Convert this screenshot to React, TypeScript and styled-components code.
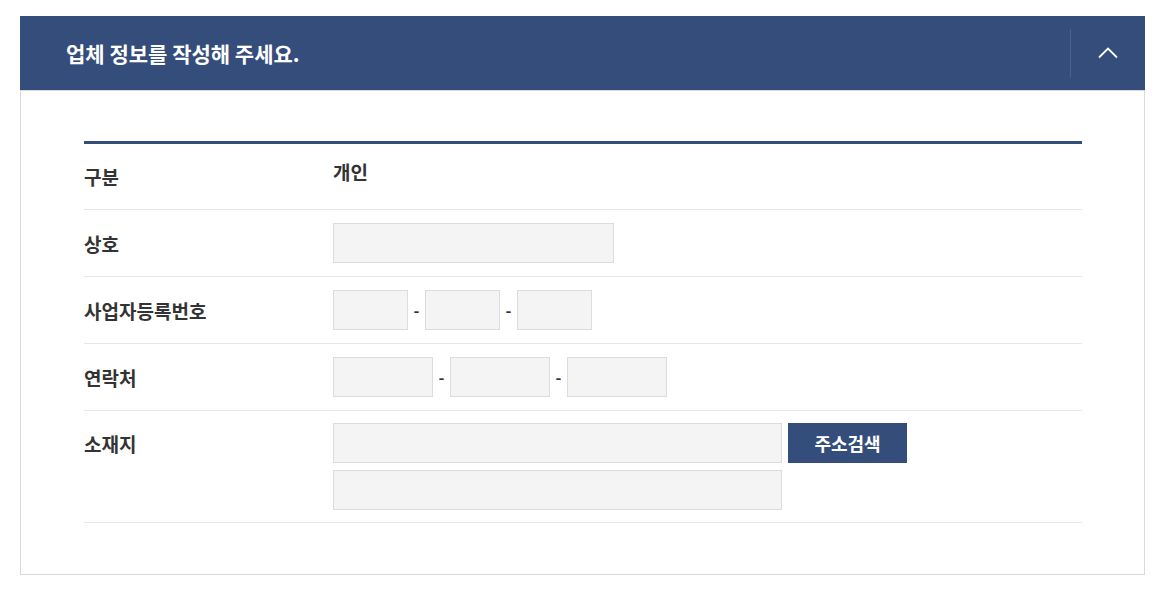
import React from "react";
import styled, { createGlobalStyle } from "styled-components";

const Global = createGlobalStyle`
  html, body { margin: 0; padding: 0; background: #fff; }
  body {
    font-family: "Noto Sans CJK KR", "Noto Sans", sans-serif;
    color: #333;
  }
  * { box-sizing: border-box; }
`;

const NAVY = "#344d7a";

const Page = styled.div`
  padding: 16px 0 0 20px;
`;

const Panel = styled.section`
  width: 1125px;
`;

const Header = styled.header`
  height: 74px;
  background: ${NAVY};
  display: flex;
  align-items: center;
`;

const Title = styled.h2`
  flex: 1;
  margin: 0;
  padding-left: 46px;
  color: #fff;
  font-size: 21px;
  font-weight: 700;
  letter-spacing: 0;
`;

const Divider = styled.span`
  width: 1px;
  height: 49px;
  background: #4a6190;
`;

const Toggle = styled.button`
  width: 74px;
  height: 74px;
  border: 0;
  padding: 0;
  background: transparent;
  display: flex;
  align-items: center;
  justify-content: center;
  cursor: pointer;
`;

const Body = styled.div`
  border: 1px solid #d9d9d9;
  padding: 50px 62px 51px 63px;
`;

const Table = styled.div`
  border-top: 3px solid ${NAVY};
`;

const Row = styled.div<{ $pad: string }>`
  display: grid;
  grid-template-columns: 249px 1fr;
  align-items: center;
  padding: ${(p) => p.$pad};
  border-bottom: 1px solid #e8e8e8;
`;

const Label = styled.div<{ $top?: boolean }>`
  font-size: 19px;
  font-weight: 700;
  color: #333;
  align-self: ${(p) => (p.$top ? "start" : "center")};
  padding-top: ${(p) => (p.$top ? "7px" : "0")};
`;

const Value = styled.div`
  font-size: 19px;
  font-weight: 700;
  color: #333;
  margin-top: -10px;
`;

const Field = styled.div`
  display: flex;
  align-items: center;
`;

const Stack = styled.div`
  display: flex;
  flex-direction: column;
  gap: 7px;
`;

const Input = styled.input<{ $w: number }>`
  width: ${(p) => p.$w}px;
  height: 40px;
  background: #f4f4f4;
  border: 1px solid #dcdcdc;
  padding: 0 10px;
  font: inherit;
  outline: none;
`;

const Dash = styled.span`
  width: 17px;
  text-align: center;
  font-size: 16px;
  font-weight: 700;
  color: #333;
`;

const SearchButton = styled.button`
  margin-left: 6px;
  width: 119px;
  height: 40px;
  border: 0;
  background: ${NAVY};
  color: #fff;
  font-family: "Noto Sans CJK KR", sans-serif;
  font-size: 18px;
  font-weight: 700;
  cursor: pointer;
`;

const Split = ({ w }: { w: number }) => (
  <Field>
    <Input $w={w} />
    <Dash>-</Dash>
    <Input $w={w} />
    <Dash>-</Dash>
    <Input $w={w} />
  </Field>
);

export default function App() {
  return (
    <Page>
      <Global />
      <Panel>
        <Header>
          <Title>업체 정보를 작성해 주세요.</Title>
          <Divider />
          <Toggle aria-label="접기">
            <svg width="20" height="12" viewBox="0 0 20 12">
              <polyline
                points="1,10.5 10,1.5 19,10.5"
                fill="none"
                stroke="#fff"
                strokeWidth="1.8"
              />
            </svg>
          </Toggle>
        </Header>
        <Body>
          <Table>
            <Row $pad="0" style={{ height: 66 }}>
              <Label>구분</Label>
              <Value>개인</Value>
            </Row>
            <Row $pad="13px 0">
              <Label>상호</Label>
              <Field>
                <Input $w={281} />
              </Field>
            </Row>
            <Row $pad="13px 0">
              <Label>사업자등록번호</Label>
              <Split w={75} />
            </Row>
            <Row $pad="13px 0">
              <Label>연락처</Label>
              <Split w={100} />
            </Row>
            <Row $pad="12px 0">
              <Label $top>소재지</Label>
              <Stack>
                <Field>
                  <Input $w={449} />
                  <SearchButton>주소검색</SearchButton>
                </Field>
                <Input $w={449} />
              </Stack>
            </Row>
          </Table>
        </Body>
      </Panel>
    </Page>
  );
}
